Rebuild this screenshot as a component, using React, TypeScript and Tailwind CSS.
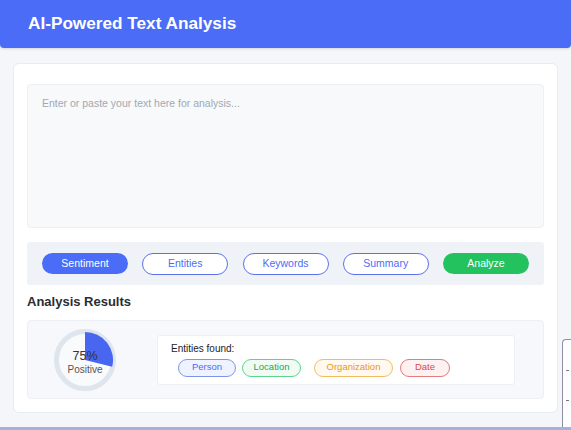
export default function App() {
  const tabs = ['Entities', 'Keywords', 'Summary']
  const tags = [
    { label: 'Person', cls: 'w-[58px] bg-[#eef3ff] border-[#7f95ea] text-[#4a6cf7]' },
    { label: 'Location', cls: 'w-[59px] ml-[6px] bg-[#effbf3] border-[#5fd38d] text-[#22a75a]' },
    { label: 'Organization', cls: 'w-[79px] ml-[13px] bg-[#fff9ef] border-[#f3bd63] text-[#e9962a]' },
    { label: 'Date', cls: 'w-[50px] ml-[7px] bg-[#fdf1f1] border-[#e57b7b] text-[#d94848]' },
  ]

  return (
    <div className="relative min-h-[430px] w-[571px] overflow-hidden bg-[#f4f6f9] font-['Liberation_Sans',Arial,sans-serif]">
      <div className="flex h-[48px] items-center rounded-b-[4px] bg-[#4b6cf6] px-[28px] shadow-sm">
        <h1 className="text-[17.2px] font-bold text-white">AI-Powered Text Analysis</h1>
      </div>

      <div className="mx-[13px] mt-[15px] rounded-[6px] border border-[#e8ebf0] bg-white px-[13px] pb-[13px] pt-[20px]">
        <div className="h-[144px] rounded-[4px] border border-[#eceff3] bg-[#f7f9fb] px-[14px] py-[11px]">
          <p className="text-[10.5px] text-[#a3a8b0]">Enter or paste your text here for analysis...</p>
        </div>

        <div className="mt-[14px] flex h-[43px] items-center justify-between rounded-[3px] bg-[#eff3f8] px-[15px]">
          <button className="h-[21px] w-[86px] rounded-full bg-[#4b6cf6] text-[10.5px] text-white">Sentiment</button>
          {tabs.map((t) => (
            <button
              key={t}
              className="h-[22px] w-[86px] rounded-full border-[1.5px] border-[#5c72e6] bg-white text-[10.5px] text-[#4b6cf6]"
            >
              {t}
            </button>
          ))}
          <button className="h-[21px] w-[86px] rounded-full bg-[#24c15f] text-[10.5px] text-white">Analyze</button>
        </div>

        <h2 className="mt-[9px] text-[13px] font-bold leading-[16px] text-[#2a2d33]">Analysis Results</h2>

        <div className="mt-[10px] flex h-[79px] items-center rounded-[4px] border border-[#eceff3] bg-[#f6f8fb] pl-[26px] pr-[28px]">
          <div className="relative h-[62px] w-[62px] shrink-0">
            <svg width="62" height="62" viewBox="0 0 62 62" className="absolute inset-0">
              <circle cx="31" cy="31" r="28.5" fill="#f8fafc" stroke="#dfe5ec" strokeWidth="5" />
              <path d="M31 31 L31 3 A28 28 0 0 1 58.2 37.8 Z" fill="#4866f0" />
            </svg>
            <div className="absolute inset-0 flex flex-col items-center justify-center pt-[5px]">
              <span className="text-[12.5px] leading-[14px] text-[#333]">75%</span>
              <span className="text-[10px] leading-[13px] text-[#555]">Positive</span>
            </div>
          </div>

          <div className="ml-[41px] flex h-[50px] flex-1 flex-col justify-center rounded-[3px] border border-[#eceff3] bg-white px-[13px]">
            <p className="text-[10px] leading-[12px] text-[#222]">Entities found:</p>
            <div className="ml-[7px] mt-[4px] flex">
              {tags.map((g) => (
                <span
                  key={g.label}
                  className={`flex h-[18px] items-center justify-center rounded-full border text-[9.5px] ${g.cls}`}
                >
                  {g.label}
                </span>
              ))}
            </div>
          </div>
        </div>
      </div>

      <div className="absolute left-[562px] top-[339px] h-[91px] w-[20px] rounded-tl-[4px] border-l border-t border-[#8a8fa6] bg-white">
        <div className="absolute left-[3px] top-[30px] h-px w-[3px] bg-[#777]" />
        <div className="absolute left-[3px] top-[60px] h-px w-[3px] bg-[#777]" />
      </div>
      <div className="absolute bottom-0 left-0 h-[3px] w-full bg-[#a9b0d8]" />
    </div>
  )
}
